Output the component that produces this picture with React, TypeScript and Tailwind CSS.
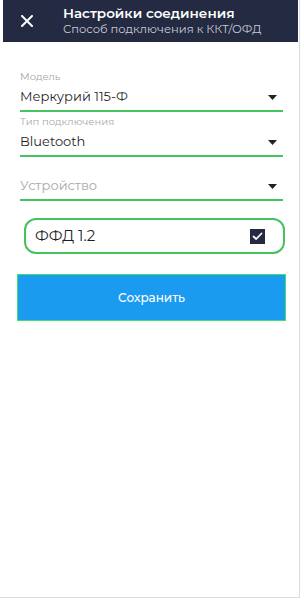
import React from "react";

const font = { fontFamily: "Montserrat, Inter, 'Open Sans', sans-serif" };

function Caret() {
  return (
    <svg width="9" height="5" viewBox="0 0 9 5" className="shrink-0">
      <path d="M0 0 L9 0 L4.5 5 Z" fill="#222" />
    </svg>
  );
}

function Field({ label, value, placeholder }: { label?: string; value?: string; placeholder?: string }) {
  return (
    <div className="flex flex-col">
      {label ? <div className="text-[10px] leading-[12px] text-[#a8a8a8] mb-[5px]">{label}</div> : null}
      <div className="flex items-center justify-between pr-[6px] h-[18px]">
        <span className={value ? "text-[13px] text-[#1f1f1f]" : "text-[13px] text-[#a8a8a8]"}>{value ?? placeholder}</span>
        <Caret />
      </div>
      <div className="h-[2px] bg-[#45c35e] mt-[4px]" />
    </div>
  );
}

export default function App() {
  return (
    <div style={font} className="w-[300px] h-[598px] bg-white border-r border-b border-[#dcdcdc] flex flex-col">
      <div className="ml-[3px] w-[295px] h-[42px] bg-[#232a42] flex items-center">
        <div className="w-[60px] flex justify-center -ml-[6px]">
          <svg width="12" height="12" viewBox="0 0 12 12">
            <path d="M1 1 L11 11 M11 1 L1 11" stroke="#fff" strokeWidth="2" strokeLinecap="round" />
          </svg>
        </div>
        <div className="flex flex-col ml-[6px]">
          <div className="text-[13.5px] leading-[17px] font-semibold text-white">Настройки соединения</div>
          <div className="text-[11.5px] leading-[15px] text-[#c9ccd6]">Способ подключения к ККТ/ОФД</div>
        </div>
      </div>
      <div className="pl-[20px] pr-[16px] pt-[29px] flex flex-col">
        <Field label="Модель" value="Меркурий 115-Ф" />
        <div className="h-[4px]" />
        <Field label="Тип подключения" value="Bluetooth" />
        <div className="h-[20px]" />
        <Field placeholder="Устройство" />
      </div>
      <div className="ml-[24px] mr-[14px] mt-[17px] h-[36px] rounded-[12px] border-2 border-[#45c35e] flex items-center justify-between pl-[9px] pr-[18px]">
        <span className="text-[15px] text-[#1f1f1f]">ФФД 1.2</span>
        <div className="w-[15px] h-[15px] bg-[#232a42] flex items-center justify-center">
          <svg width="11" height="9" viewBox="0 0 11 9">
            <path d="M1.5 4.5 L4.2 7 L9.5 1.5" stroke="#fff" strokeWidth="1.8" fill="none" strokeLinecap="round" strokeLinejoin="round" />
          </svg>
        </div>
      </div>
      <button className="ml-[17px] mr-[13px] mt-[20px] h-[47px] bg-[#1b9bf0] border border-[#3fe06a] flex items-center justify-center text-white text-[12px] font-medium">
        Сохранить
      </button>
    </div>
  );
}
